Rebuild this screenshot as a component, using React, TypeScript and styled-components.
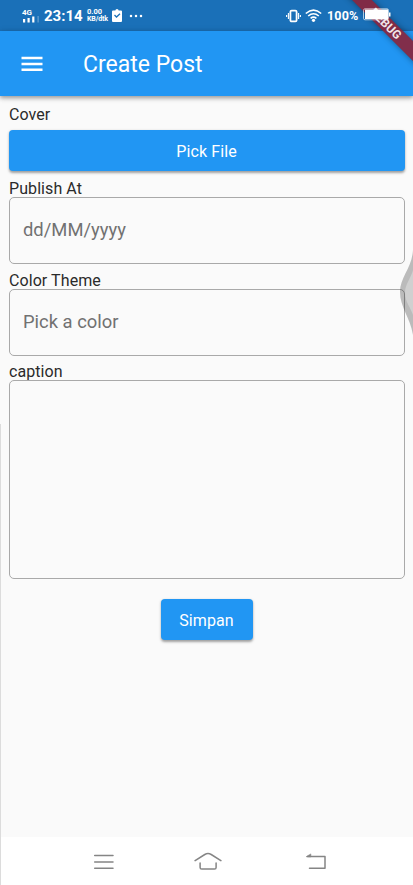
import React from "react";
import styled, { createGlobalStyle } from "styled-components";

const GlobalStyle = createGlobalStyle`
  * { box-sizing: border-box; }
  body { margin: 0; background: #fafafa; font-family: Roboto, sans-serif; }
`;

const Screen = styled.div`
  position: relative;
  display: flex;
  flex-direction: column;
  width: 413px;
  height: 885px;
  overflow: hidden;
  background: #fafafa;
`;

const StatusBar = styled.div`
  display: flex;
  align-items: center;
  flex: none;
  height: 31px;
  padding: 0 22px;
  background: #1a70b8;
  color: #fff;
`;

const Clock = styled.span`
  margin-left: 4px;
  width: 43px;
  font-size: 15px;
  font-weight: 700;
  line-height: 32px;
`;

const Speed = styled.span`
  display: flex;
  flex-direction: column;
  width: 23px;
  font-size: 7.5px;
  line-height: 7.5px;
  font-weight: 700;
  white-space: nowrap;
`;

const SpeedUnit = styled.span`
  font-size: 7px;
  letter-spacing: -0.1px;
`;

const Signal = styled.span`
  display: flex;
  flex-direction: column;
  width: 18px;
  font-size: 8px;
  line-height: 7px;
  font-weight: 700;
`;

const StatusIcon = styled.svg<{ $gap?: number }>`
  display: block;
  flex: none;
  margin-left: ${(p) => p.$gap ?? 0}px;
`;

const Spacer = styled.div`
  flex: 1;
`;

const Percent = styled.span`
  margin-left: 5px;
  width: 64px;
  font-size: 12.5px;
  font-weight: 700;
  letter-spacing: 0.2px;
  line-height: 32px;
`;

const AppBar = styled.header`
  display: flex;
  align-items: center;
  flex: none;
  height: 65px;
  padding-left: 21px;
  background: #2196f3;
  box-shadow: 0 2px 4px rgba(0, 0, 0, 0.3), 0 1px 7px rgba(0, 0, 0, 0.16);
`;

const Title = styled.h1`
  margin: 2px 0 0 40px;
  color: #fff;
  font-size: 23px;
  font-weight: 400;
  line-height: 30px;
`;

const Form = styled.main`
  display: flex;
  flex-direction: column;
  flex: 1;
  padding: 9px 8px 0 9px;
`;

const Label = styled.label`
  height: 18px;
  color: #2a2a2a;
  font-size: 16px;
  line-height: 19px;
  letter-spacing: 0.08px;
`;

const Button = styled.button<{ $compact?: boolean }>`
  align-self: ${(p) => (p.$compact ? "center" : "stretch")};
  width: ${(p) => (p.$compact ? "92px" : "auto")};
  height: 41px;
  margin: ${(p) => (p.$compact ? "20px 0 0" : "7px 0 8px")};
  padding: 2px 1px 0 0;
  border: 0;
  border-radius: 4px;
  background: #2196f3;
  color: #fff;
  font: 400 16px/39px Roboto, sans-serif;
  letter-spacing: 0.1px;
  box-shadow: 0 1.5px 2.5px rgba(0, 0, 0, 0.36);
`;

const Field = styled.div<{ $height: number; $after?: number }>`
  display: flex;
  align-items: center;
  height: ${(p) => p.$height}px;
  margin-bottom: ${(p) => p.$after ?? 0}px;
  padding: 0 13px 2px;
  border: 1px solid #a9a9a9;
  border-radius: 5px;
  color: #717171;
  font-size: 18.4px;
`;

const NavBar = styled.nav`
  display: flex;
  align-items: center;
  justify-content: space-between;
  flex: none;
  height: 48px;
  padding: 2px 86px 0 93px;
  background: #fff;
`;

const NavIcon = styled.svg<{ $after?: number }>`
  display: block;
  height: 20px;
  margin-right: ${(p) => p.$after ?? 0}px;
  fill: none;
  stroke: #858585;
  stroke-width: 1.5;
  stroke-linecap: round;
  stroke-linejoin: round;
`;

const EdgeLine = styled.div`
  position: absolute;
  left: 0;
  top: 424px;
  width: 1px;
  height: 461px;
  background: #dcdcdc;
`;

const EdgeHandle = styled.svg`
  position: absolute;
  right: 0;
  top: 246px;
`;

const BannerClip = styled.div`
  position: absolute;
  top: 0;
  right: 0;
  width: 80px;
  height: 80px;
  overflow: hidden;
  pointer-events: none;
`;

const Banner = styled.div`
  position: absolute;
  left: -10px;
  top: 16px;
  width: 124px;
  height: 14px;
  transform: rotate(45deg);
  background: rgba(137, 38, 61, 0.93);
  box-shadow: 0 0 6px rgba(0, 0, 0, 0.4);
  color: #f1e6ea;
  font-size: 12px;
  font-weight: 700;
  line-height: 14px;
  padding-left: 2px;
  text-align: center;
`;

const Battery = styled(StatusIcon)`
  position: absolute;
  z-index: 2;
  left: 363px;
  top: 8px;
`;

export default function App() {
  return (
    <Screen>
      <GlobalStyle />
      <StatusBar>
        <Signal>
          4G
          <StatusIcon width="18" height="7" viewBox="0 0 18 7" fill="#fff">
            <path d="M1 3h2.2v3.5H1zM5.5 2h2.2v4.5H5.5zM10.2.5h2.2v6h-2.2z" />
            <path d="M15.5 0h1.2v6.5h-1.2z" opacity=".35" />
          </StatusIcon>
        </Signal>
        <Clock>23:14</Clock>
        <Speed>
          0.00
          <SpeedUnit>KB/dtk</SpeedUnit>
        </Speed>
        <StatusIcon $gap={2} width="10" height="13" viewBox="0 0 10 13">
          <path d="M1 1.5h2.3Q3.5 0 5 0t1.7 1.5H9q1 0 1 1V12q0 1-1 1H1q-1 0-1-1V2.5q0-1 1-1z" fill="#fff" />
          <path d="m2.5 6 2 2L8 4.8" fill="none" stroke="#1a70b8" strokeWidth="1.3" />
        </StatusIcon>
        <StatusIcon $gap={7} width="14" height="4" viewBox="0 0 14 4" fill="#fff">
          <circle cx="2" cy="2" r="1.25" />
          <circle cx="7" cy="2" r="1.25" />
          <circle cx="12" cy="2" r="1.25" />
        </StatusIcon>
        <Spacer />
        <StatusIcon width="15" height="14" viewBox="0 0 15 14" fill="none" stroke="#fff">
          <rect x="4.4" y="1.6" width="6.2" height="10.8" rx="1.2" strokeWidth="1.8" />
          <path d="M2.4 4v6M12.6 4v6M.6 6v2M14.4 6v2" strokeWidth="1.1" />
        </StatusIcon>
        <StatusIcon $gap={4} width="17" height="13" viewBox="0 0 17 13" fill="none" stroke="#fff" strokeWidth="1.6">
          <path d="M.8 4.5Q8.5-2.4 16.2 4.5M3.2 7q5.3-4.5 10.6 0M5.6 9.3q2.9-2.3 5.8 0" />
          <circle cx="8.5" cy="11.3" r="1.6" fill="#fff" stroke="none" />
        </StatusIcon>
        <Percent>100%</Percent>
      </StatusBar>
      <AppBar>
        <StatusIcon width="22" height="16" viewBox="0 0 22 16" fill="#fff">
          <path d="M.5.8h21v2.5H.5zM.5 6.7h21v2.5H.5zM.5 12.6h21v2.5H.5z" />
        </StatusIcon>
        <Title>Create Post</Title>
      </AppBar>
      <Form>
        <Label>Cover</Label>
        <Button>Pick File</Button>
        <Label>Publish At</Label>
        <Field $height={67} $after={7}>dd/MM/yyyy</Field>
        <Label>Color Theme</Label>
        <Field $height={67} $after={6}>Pick a color</Field>
        <Label>caption</Label>
        <Field $height={199} />
        <Button $compact>Simpan</Button>
      </Form>
      <NavBar>
        <NavIcon width="21" viewBox="0 0 21 20">
          <path d="M1.7 3.5H20M1.7 9.9H20M1.7 16.2H20" />
        </NavIcon>
        <NavIcon $after={5} width="28" viewBox="0 0 28 20">
          <path d="M1.1 8.7 10.8 2.5q3.2-1.8 6.4 0l9.7 6.2M6.1 11v4.5q0 1.6 1.6 1.6h12.8q1.6 0 1.6-1.6V11" />
        </NavIcon>
        <NavIcon width="21" viewBox="0 0 21 20">
          <path d="M1.5 4.5H19v11.8H3.5" />
          <path d="m.5 4.5 4.3-2.6v2.6z" fill="#858585" strokeWidth=".6" />
        </NavIcon>
      </NavBar>
      <EdgeLine />
      <EdgeHandle width="14" height="92" viewBox="0 0 14 92">
        <path d="M14 4C13 22 1 31 1 46s10 25 13 43z" fill="#000" fillOpacity=".25" />
        <path d="M14 24C12 32 6 38 6 47s6 15 8 22z" fill="#d0d0d0" />
      </EdgeHandle>
      <BannerClip>
        <Banner>DEBUG</Banner>
      </BannerClip>
      <Battery width="28" height="13" viewBox="0 0 28 13">
        <path d="M2 .8h22q1.5 0 1.5 1.5v8q0 1.5-1.5 1.5H2Q.5 11.8.5 10.3v-8Q.5.8 2 .8z" fill="none" stroke="#fff" strokeOpacity=".65" />
        <path d="M2 1.5h23V11H2zM26 4.5h1.5v4H26z" fill="#fff" />
      </Battery>
    </Screen>
  );
}
